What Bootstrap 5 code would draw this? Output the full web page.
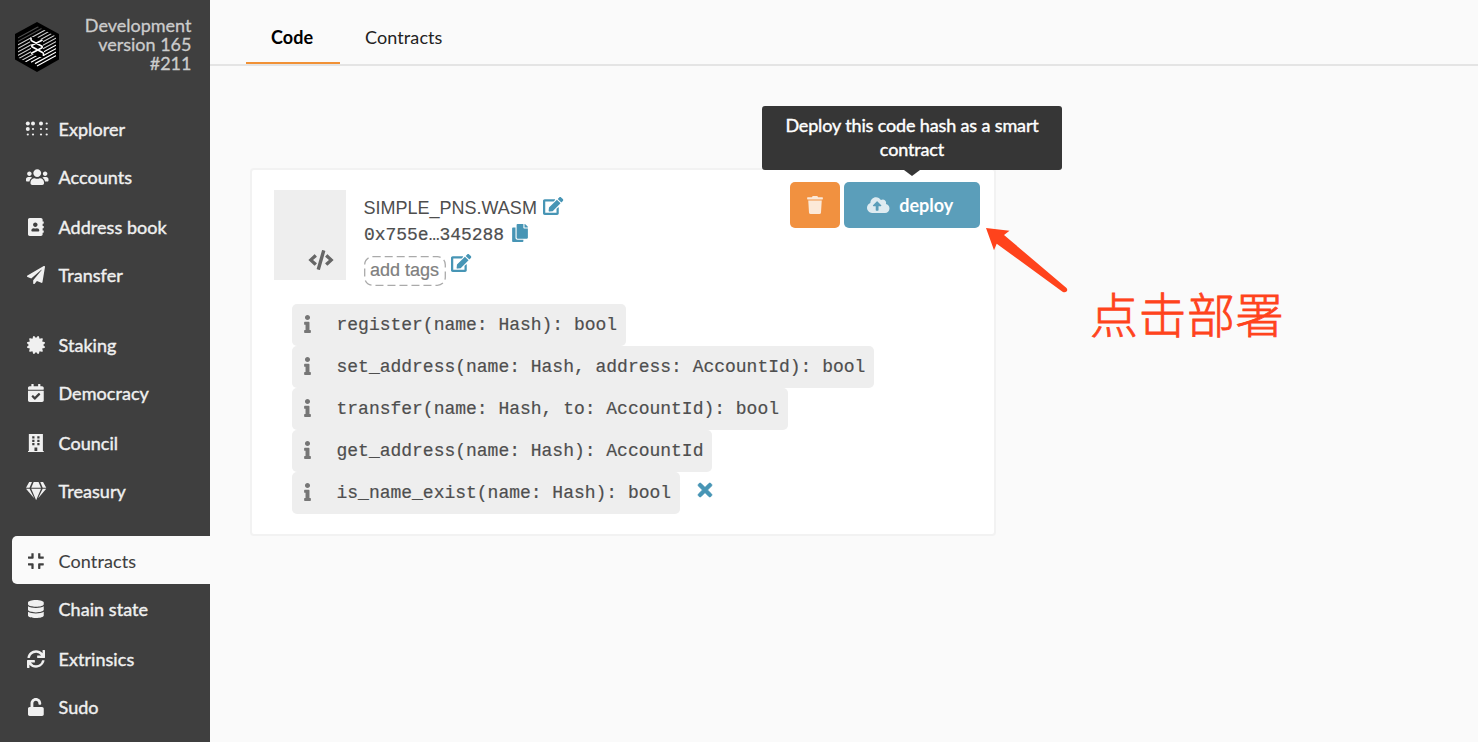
<!DOCTYPE html>
<html lang="en">
<head>
<meta charset="utf-8">
<meta name="viewport" content="width=device-width, initial-scale=1">
<title>Contracts</title>
<link href="https://cdn.jsdelivr.net/npm/bootstrap@5.3.0/dist/css/bootstrap.min.css" rel="stylesheet">
<style>
  body { font-family: Lato, "Noto Sans CJK SC", sans-serif; font-size: 18px; background: #fafafa; color: #4e4e4e; height: 742px; overflow: hidden; }
  svg { display: block; fill: currentColor; flex: none; overflow: visible; }
  .side { width: 210px; height: 742px; background: #3f3f3f; color: #f0f0f0; }
  .brand { height: 104px; padding: 16px 18.5px 0 15px; }
  .brand-info { line-height: 19px; color: #ccc; -webkit-text-stroke: .3px #ccc; }
  .brand svg { margin-top: 6px; }
  .side-group { margin-bottom: 22px; }
  .side-link { height: 48px; margin-left: 12px; padding: 2px 0 0 14px; border-radius: 5px 0 0 5px; color: #f0f0f0; text-decoration: none; -webkit-text-stroke: .4px; letter-spacing: .05px; }
  .side-link:nth-child(3) { margin-top: 2px; }
  .side-link.active { background: #fafafa; color: #3f3f3f; -webkit-text-stroke: .1px; letter-spacing: .12px; }
  .side-icon { width: 19px; margin-right: 13.500px; }
  .side-icon svg { height: 18px; }
  .tabs { height: 66px; padding-left: 36px; border-bottom: 2px solid #e4e4e4; }
  .tabs a { height: 64px; padding: 24px 25px 0; color: #222; text-decoration: none; border-bottom: 2px solid transparent; letter-spacing: .1px; }
  .tabs a.active { width: 94px; font-weight: 700; color: #000; border-color: #f19135; }
  .code-card { width: 746px; height: 368px; margin: 102px 0 0 40px; padding: 20px 14px 0 22px; border: 2px solid #f2f2f2; border-radius: 4px; background: #fff; }
  .thumb { width: 72px; height: 90px; background: #eee; padding: 0 12.500px 10px 0; color: #666; margin-right: 18px; }
  .sans { font-family: "Liberation Sans", sans-serif; }
  .mono { font-family: "Liberation Mono", monospace; }
  .teal { color: #4795b5; }
  .code-name { height: 32px; padding-top: 5px; gap: 6px; margin-left: -.5px; }
  .code-name svg { margin-bottom: 6px; }
  .code-hash { height: 26px; gap: 8px; letter-spacing: -.03px; -webkit-text-stroke: .2px; }
  .code-hash svg { margin-bottom: 4px; }
  .tag-row { height: 32px; padding-top: 6px; margin-top: 2px; }
  .tag-row > svg { margin: -2px 0 0 5px; }
  .tag-box { width: 82px; height: 30px; color: #808080; padding: 0 1px 2px 0; line-height: 28px; -webkit-text-stroke: .2px; }
  .tag-box rect { fill: none; stroke: #aaa; stroke-width: 1.3; stroke-dasharray: 8 4; }
  .head-row { height: 98px; }
  .actions { margin-top: -8px; gap: 4px; height: 46px; }
  .act { height: 46px; border: 0; border-radius: 5px; color: #fff; padding: 0; }
  .act svg { opacity: .8; }
  .act-del { width: 50px; background: #f19140; padding-right: 1px; }
  .act-deploy { width: 136px; background: #5b9eba; font-weight: 700; gap: 10px; padding-right: 4px; }
  .tip { left: 50%; bottom: calc(100% + 12px); width: 300px; height: 64px; margin-left: -150px; padding: 7px 15px; background: #363636; border-radius: 3px; line-height: 24px; font-weight: 400; letter-spacing: -.14px; color: #fff; -webkit-text-stroke: .4px; }
  .tip::after { content: ""; position: absolute; left: 142px; top: 64px; border: 8px solid transparent; border-top: 6px solid #363636; border-bottom: 0; }
  .methods { margin: 16px 0 0 18px; }
  .method { height: 42px; background: #eee; border-radius: 5px; padding: 0 9px 0 12px; letter-spacing: -.01px; -webkit-text-stroke: .2px; }
  .method svg { color: #767676; margin: 0 25.500px 2px 0; }
  .clear-icon { margin: 0 0 7px 18px; }
  .note-arrow { left: 980px; top: 222px; }
  .note { left: 1090px; top: 277px; font-family: "Noto Sans CJK SC", sans-serif; font-size: 48px; line-height: 70px; color: #ff431c; font-weight: 300; -webkit-text-stroke: .8px #ff431c; letter-spacing: .5px; white-space: nowrap; }
</style>
</head>
<body class="d-flex position-relative">
<aside class="side flex-shrink-0">
  <div class="brand d-flex justify-content-between">
    <svg width="44" height="50" viewBox="0 0 44 50">
      <defs><clipPath id="hex"><path d="M22 4 41 14.500V35.500L22 46 3 35.500V14.500z"/></clipPath></defs>
      <path d="M22 0 44 12V37.500L22 50 0 37.500V12z" fill="#000"/>
      <g clip-path="url(#hex)" stroke="#fff" stroke-width="1.200">
        <path opacity=".3" d="M0 14 44-10M0 17.500 44-6.500M0 21 44-3"/>
        <path opacity=".8" d="M0 24.500 44 .5M0 28 44 4M0 31.500 44 7.500M0 35 44 11M0 38.500 44 14.500M0 42 44 18"/>
        <path d="M0 45.500 44 21.500M16 40.300 44 25M20 41.600 44 28.500M22 44 44 32M22 47.500 44 35.500"/>
      </g>
      <path d="M16 15h6l6 4v4l-1 2 2 4v6h-6l-7-4v-5l1-3-2-3z" fill="#000"/>
      <path d="M16 15.500v2q0 1 1 1.500l9.500 5q1.500 1 0 2l-10.500 5.500M27.500 18 17.500 23q-1.500 1 0 2l10 5.500q1 .5 1 1.500V34" fill="none" stroke="#fff" stroke-width="1.600"/>
    </svg>
    <div class="brand-info text-end">Development<br>version 165<br>#211</div>
  </div>
  <nav>
    <div class="side-group">
      <a class="side-link d-flex align-items-center" href="#"><span class="side-icon d-flex"><svg width="23" viewBox="0 0 23 18"><circle cx="1.800" cy="3.500" r="2"/><circle cx="7" cy="3.500" r="2"/><circle cx="15" cy="3.500" r="2"/><circle cx="20.700" cy="3.500" r="1.100"/><circle cx="1.800" cy="9" r="2"/><circle cx="7" cy="9" r="1.100"/><circle cx="15" cy="9" r="1.100"/><circle cx="20.700" cy="9" r="1.100"/><circle cx="1.800" cy="14.500" r="1.100"/><circle cx="7" cy="14.500" r="1.100"/><circle cx="15" cy="14.500" r="1.100"/><circle cx="20.700" cy="14.500" r="1.100"/></svg></span>Explorer</a>
      <a class="side-link d-flex align-items-center" href="#"><span class="side-icon d-flex"><svg viewBox="0 0 640 512"><path d="M96 224c35.300 0 64-28.700 64-64s-28.700-64-64-64-64 28.700-64 64 28.700 64 64 64zm448 0c35.300 0 64-28.700 64-64s-28.700-64-64-64-64 28.700-64 64 28.700 64 64 64zm32 32h-64c-17.600 0-33.500 7.100-45.100 18.600 40.300 22.100 68.900 62 75.100 109.400h66c17.700 0 32-14.300 32-32v-32c0-35.300-28.700-64-64-64zm-256 0c61.900 0 112-50.100 112-112S381.900 32 320 32 208 82.100 208 144s50.100 112 112 112zm76.800 32h-8.300c-20.800 10-43.900 16-68.500 16s-47.600-6-68.500-16h-8.300C179.600 288 128 339.600 128 403.200V432c0 26.500 21.500 48 48 48h288c26.500 0 48-21.500 48-48v-28.800c0-63.600-51.600-115.200-115.200-115.200zm-223.700-13.400C161.500 263.100 145.600 256 128 256H64c-35.300 0-64 28.700-64 64v32c0 17.700 14.300 32 32 32h65.900c6.300-47.400 34.900-87.300 75.200-109.400z"/></svg></span>Accounts</a>
      <a class="side-link d-flex align-items-center" href="#"><span class="side-icon d-flex justify-content-center"><svg viewBox="0 0 448 512"><path d="M436 160c6.600 0 12-5.400 12-12v-40c0-6.600-5.400-12-12-12h-20V48c0-26.500-21.500-48-48-48H48C21.500 0 0 21.500 0 48v416c0 26.500 21.500 48 48 48h320c26.500 0 48-21.500 48-48v-48h20c6.600 0 12-5.400 12-12v-40c0-6.600-5.400-12-12-12h-20v-64h20c6.600 0 12-5.400 12-12v-40c0-6.600-5.400-12-12-12h-20v-64h20zm-228-32c35.300 0 64 28.700 64 64s-28.700 64-64 64-64-28.700-64-64 28.700-64 64-64zm112 236.800c0 10.600-10 19.200-22.400 19.200H118.400C106 384 96 375.400 96 364.800v-19.200c0-31.800 30.100-57.600 67.200-57.600h5c12.300 5.100 25.700 8 39.800 8s27.600-2.900 39.800-8h5c37.100 0 67.200 25.800 67.200 57.600v19.200z"/></svg></span>Address book</a>
      <a class="side-link d-flex align-items-center" href="#"><span class="side-icon d-flex justify-content-center"><svg viewBox="0 0 512 512"><path d="M476 3.200L12.500 270.600c-18.100 10.400-15.800 35.600 2.200 43.200L121 358.400l287.300-253.200c5.500-4.900 13.300 2.600 8.600 8.300L176 407v80.500c0 23.600 28.500 32.900 42.500 15.800L282 426l124.600 52.200c14.200 6 30.400-2.900 33-18.200l72-432C515 7.800 493.300-6.800 476 3.200z"/></svg></span>Transfer</a>
    </div>
    <div class="side-group">
      <a class="side-link d-flex align-items-center" href="#"><span class="side-icon d-flex justify-content-center"><svg viewBox="0 0 512 512"><path d="M458.622 255.920l45.985-45.005c13.708-12.977 7.316-36.039-10.664-40.339l-62.650-15.990 17.661-62.015c4.991-17.838-11.829-34.663-29.661-29.671l-61.994 17.667-15.984-62.671C337.085.197 313.765-6.276 300.990 7.228L256 53.570 211.011 7.229c-12.630-13.351-36.047-7.234-40.325 10.668l-15.984 62.671-61.995-17.667C74.870 57.907 58.056 74.738 63.046 92.572l17.661 62.015-62.650 15.990C.069 174.878-6.310 197.944 7.392 210.915l45.985 45.005-45.985 45.004c-13.708 12.977-7.316 36.039 10.664 40.339l62.650 15.990-17.661 62.015c-4.991 17.838 11.829 34.663 29.661 29.671l61.994-17.667 15.984 62.671c4.439 18.575 27.696 24.018 40.325 10.668L256 458.610l44.989 46.001c12.500 13.488 35.987 7.486 40.325-10.668l15.984-62.671 61.994 17.667c17.836 4.994 34.651-11.837 29.661-29.671l-17.661-62.015 62.650-15.990c17.987-4.302 24.366-27.367 10.664-40.339l-45.984-45.004z"/></svg></span>Staking</a>
      <a class="side-link d-flex align-items-center" href="#"><span class="side-icon d-flex justify-content-center"><svg viewBox="0 0 448 512"><path d="M436 160H12c-6.627 0-12-5.373-12-12v-36c0-26.510 21.490-48 48-48h48V12c0-6.627 5.373-12 12-12h40c6.627 0 12 5.373 12 12v52h128V12c0-6.627 5.373-12 12-12h40c6.627 0 12 5.373 12 12v52h48c26.510 0 48 21.490 48 48v36c0 6.627-5.373 12-12 12zM12 192h424c6.627 0 12 5.373 12 12v260c0 26.510-21.490 48-48 48H48c-26.510 0-48-21.490-48-48V204c0-6.627 5.373-12 12-12zm333.296 95.947l-28.169-28.398c-4.667-4.705-12.265-4.736-16.970-.068L194.120 364.665l-45.980-46.352c-4.667-4.705-12.266-4.736-16.971-.068l-28.397 28.170c-4.705 4.667-4.736 12.265-.068 16.970l82.601 83.269c4.667 4.705 12.265 4.736 16.970.068l142.953-141.805c4.705-4.667 4.736-12.265.068-16.970z"/></svg></span>Democracy</a>
      <a class="side-link d-flex align-items-center" href="#"><span class="side-icon d-flex justify-content-center"><svg viewBox="0 0 448 512"><path fill-rule="evenodd" d="M24 0H424V480H448V512H0V480H24zM120 64v64h64V64zM264 64v64h64V64zM120 160v64h64v-64zM264 160v64h64v-64zM120 256v64h64v-64zM264 256v64h64v-64zM184 384v96h80v-96z"/></svg></span>Council</a>
      <a class="side-link d-flex align-items-center" href="#"><span class="side-icon d-flex"><svg viewBox="0 0 576 512"><path d="M485.500 0L576 160H474.900L405.700 0h79.800zm-128 0l69.200 160H149.300L218.500 0h139zm-267 0h79.800l-69.200 160H0L90.500 0zM0 192h100.700l123 251.700c1.500 3.100-2.700 5.900-5 3.300L0 192zm148.200 0h279.600l-137 318.200c-1 2.400-4.500 2.400-5.500 0L148.200 192zm204.100 251.700l123-251.700H576L357.300 446.900c-2.300 2.700-6.500-.1-5-3.200z"/></svg></span>Treasury</a>
    </div>
    <div class="side-group">
      <a class="side-link active d-flex align-items-center" href="#"><span class="side-icon d-flex justify-content-center"><svg viewBox="0 0 448 512"><path d="M436 192H312c-13.300 0-24-10.700-24-24V44c0-6.600 5.400-12 12-12h40c6.600 0 12 5.400 12 12v84h84c6.600 0 12 5.400 12 12v40c0 6.600-5.400 12-12 12zm-276-24V44c0-6.600-5.400-12-12-12h-40c-6.600 0-12 5.400-12 12v84H12c-6.600 0-12 5.400-12 12v40c0 6.600 5.400 12 12 12h124c13.300 0 24-10.700 24-24zm0 300V344c0-13.300-10.700-24-24-24H12c-6.600 0-12 5.400-12 12v40c0 6.600 5.400 12 12 12h84v84c0 6.600 5.400 12 12 12h40c6.600 0 12-5.400 12-12zm192 0v-84h84c6.600 0 12-5.400 12-12v-40c0-6.600-5.400-12-12-12H312c-13.300 0-24 10.700-24 24v124c0 6.600 5.400 12 12 12h40c6.600 0 12-5.400 12-12z"/></svg></span>Contracts</a>
      <a class="side-link d-flex align-items-center" href="#"><span class="side-icon d-flex justify-content-center"><svg viewBox="0 0 448 512"><path d="M448 73.143v45.714C448 159.143 347.667 192 224 192S0 159.143 0 118.857V73.143C0 32.857 100.333 0 224 0s224 32.857 224 73.143zM448 176v102.857C448 319.143 347.667 352 224 352S0 319.143 0 278.857V176c48.125 33.143 136.208 48.572 224 48.572S399.874 209.143 448 176zm0 160v102.857C448 479.143 347.667 512 224 512S0 479.143 0 438.857V336c48.125 33.143 136.208 48.572 224 48.572S399.874 369.143 448 336z"/></svg></span>Chain state</a>
      <a class="side-link d-flex align-items-center" href="#"><span class="side-icon d-flex justify-content-center"><svg viewBox="0 0 512 512"><path d="M440.650 12.570l4 82.770A247.160 247.160 0 0 0 255.830 8C134.730 8 33.910 94.920 12.290 209.820A12 12 0 0 0 24.090 224h49.050a12 12 0 0 0 11.670-9.260 175.910 175.910 0 0 1 317-56.940l-101.460-4.860a12 12 0 0 0-12.570 12v47.410a12 12 0 0 0 12 12H500a12 12 0 0 0 12-12V12a12 12 0 0 0-12-12h-47.370a12 12 0 0 0-11.980 12.570zM255.830 432a175.610 175.610 0 0 1-146-77.800l101.800 4.870a12 12 0 0 0 12.570-12v-47.400a12 12 0 0 0-12-12H12a12 12 0 0 0-12 12V500a12 12 0 0 0 12 12h47.350a12 12 0 0 0 12-12.600l-4.150-82.570A247.170 247.170 0 0 0 255.830 504c121.110 0 221.930-86.920 243.550-201.820a12 12 0 0 0-11.800-14.180h-49.050a12 12 0 0 0-11.670 9.260A175.860 175.860 0 0 1 255.830 432z"/></svg></span>Extrinsics</a>
      <a class="side-link d-flex align-items-center" href="#"><span class="side-icon d-flex justify-content-center"><svg viewBox="0 0 448 512"><path d="M400 256H152V152.900c0-39.600 31.700-72.500 71.300-72.900 40-.4 72.700 32.100 72.700 72v16c0 13.300 10.700 24 24 24h32c13.300 0 24-10.700 24-24v-16C376 68 307.500-.3 223.500 0 139.500.3 72 69.500 72 153.500V256H48c-26.500 0-48 21.500-48 48v160c0 26.500 21.500 48 48 48h352c26.500 0 48-21.500 48-48V304c0-26.500-21.500-48-48-48z"/></svg></span>Sudo</a>
    </div>
  </nav>
</aside>
<main class="flex-grow-1">
  <div class="tabs d-flex"><a class="active" href="#">Code</a><a href="#">Contracts</a></div>
  <article class="code-card">
    <div class="head-row d-flex align-items-start">
      <div class="thumb d-flex align-items-end justify-content-end"><svg width="26" height="20" viewBox="0 0 640 512"><path d="M278.900 511.500l-61-17.700c-6.400-1.800-10-8.500-8.200-14.900L346.200 8.700c1.800-6.400 8.500-10 14.900-8.200l61 17.700c6.400 1.800 10 8.500 8.200 14.900L293.800 503.300c-1.900 6.400-8.500 10.100-14.900 8.200zm-114-112.200l43.500-46.400c4.600-4.900 4.300-12.700-.8-17.200L117 256l90.600-79.700c5.100-4.500 5.500-12.300.8-17.200l-43.500-46.400c-4.500-4.800-12.100-5.100-17-.5L3.800 247.200c-5.100 4.700-5.100 12.800 0 17.500l144.100 135.100c4.900 4.600 12.500 4.400 17-.5zm327.200.6l144.100-135.100c5.100-4.700 5.100-12.800 0-17.500L492.100 112.100c-4.800-4.500-12.400-4.300-17 .5L431.600 159c-4.600 4.900-4.300 12.700.8 17.200L523 256l-90.600 79.700c-5.100 4.500-5.500 12.300-.8 17.200l43.500 46.400c4.500 4.900 12.100 5.100 17 .6z"/></svg></div>
      <div class="flex-grow-1">
        <div class="code-name sans d-flex align-items-center"><span>SIMPLE_PNS.WASM</span>
          <svg class="teal" width="20.250" height="18" viewBox="0 0 576 512"><path id="edit" d="M402.600 83.200l90.200 90.200c3.800 3.800 3.800 10 0 13.800L274.400 405.600l-92.800 10.300c-12.400 1.400-22.900-9.100-21.500-21.500l10.300-92.800L388.800 83.200c3.800-3.800 10-3.800 13.800 0zm162-22.900l-48.800-48.800c-15.200-15.200-39.900-15.200-55.200 0l-35.400 35.400c-3.800 3.800-3.800 10 0 13.800l90.200 90.200c3.800 3.800 10 3.800 13.800 0l35.400-35.400c15.200-15.300 15.200-40 0-55.200zM384 346.200V448H64V128h229.800c3.200 0 6.200-1.300 8.500-3.500l40-40c7.600-7.600 2.200-20.500-8.500-20.500H48C21.500 64 0 85.500 0 112v352c0 26.500 21.500 48 48 48h352c26.500 0 48-21.500 48-48V306.200c0-10.700-12.900-16-20.500-8.500l-40 40c-2.200 2.300-3.500 5.300-3.500 8.500z"/></svg></div>
        <div class="code-hash mono d-flex align-items-center"><span>0x755e…345288</span>
          <svg class="teal" width="16" height="18" viewBox="0 0 448 512"><path d="M320 448v40c0 13.255-10.745 24-24 24H24c-13.255 0-24-10.745-24-24V120c0-13.255 10.745-24 24-24h72v296c0 30.879 25.121 56 56 56h168zm0-344V0H152c-13.255 0-24 10.745-24 24v368c0 13.255 10.745 24 24 24h272c13.255 0 24-10.745 24-24V128H344c-13.200 0-24-10.800-24-24zm120.971-31.029L375.029 7.029A24 24 0 0 0 358.059 0H352v96h96v-6.059a24 24 0 0 0-7.029-16.970z"/></svg></div>
        <div class="tag-row d-flex align-items-start sans">
          <span class="tag-box position-relative d-flex align-items-center justify-content-center"><svg class="position-absolute top-0 start-0" width="82" height="30"><rect x=".7" y=".7" width="80.600" height="28.600" rx="8"/></svg>add tags</span>
          <svg class="teal" width="20.250" height="18" viewBox="0 0 576 512"><use href="#edit"/></svg>
        </div>
      </div>
      <div class="actions d-flex">
        <button class="act act-del d-flex align-items-center justify-content-center" aria-label="Delete"><svg width="16" height="18" viewBox="0 0 448 512"><path d="M432 32H312l-9.400-18.700A24 24 0 0 0 281.100 0H166.800a23.720 23.720 0 0 0-21.400 13.300L136 32H16A16 16 0 0 0 0 48v32a16 16 0 0 0 16 16h416a16 16 0 0 0 16-16V48a16 16 0 0 0-16-16zM53.200 467a48 48 0 0 0 47.900 45h245.800a48 48 0 0 0 47.900-45L416 128H32z"/></svg></button>
        <button class="act act-deploy position-relative d-flex align-items-center justify-content-center"><svg width="22.500" height="18" viewBox="0 0 640 512"><path d="M537.600 226.600c4.100-10.700 6.400-22.400 6.400-34.600 0-53-43-96-96-96-19.700 0-38.100 6-53.300 16.200C367 64.200 315.300 32 256 32c-88.400 0-160 71.600-160 160 0 2.700.1 5.400.2 8.100C40.200 219.800 0 273.200 0 336c0 79.500 64.500 144 144 144h368c70.700 0 128-57.300 128-128 0-61.900-44-113.600-102.400-125.400zM393.400 288H328v112c0 8.800-7.200 16-16 16h-48c-8.800 0-16-7.200-16-16V288h-65.400c-14.300 0-21.400-17.200-11.300-27.300l105.400-105.400c6.200-6.200 16.400-6.200 22.600 0l105.400 105.400c10.100 10.100 2.900 27.300-11.300 27.300z"/></svg>deploy<span class="tip position-absolute">Deploy this code hash as a smart contract</span></button>
      </div>
    </div>
    <div class="methods mono d-flex flex-column align-items-start">
      <div class="method d-flex align-items-center"><svg width="7" height="18" viewBox="0 0 192 512"><path id="info" d="M20 424.229h20V279.771H20c-11.046 0-20-8.954-20-20V212c0-11.046 8.954-20 20-20h112c11.046 0 20 8.954 20 20v212.229h20c11.046 0 20 8.954 20 20V492c0 11.046-8.954 20-20 20H20c-11.046 0-20-8.954-20-20v-47.771c0-11.046 8.954-20 20-20zM96 0C56.235 0 24 32.235 24 72s32.235 72 72 72 72-32.235 72-72S135.764 0 96 0z"/></svg>register(name: Hash): bool</div>
      <div class="method d-flex align-items-center"><svg width="7" height="18" viewBox="0 0 192 512"><use href="#info"/></svg>set_address(name: Hash, address: AccountId): bool</div>
      <div class="method d-flex align-items-center"><svg width="7" height="18" viewBox="0 0 192 512"><use href="#info"/></svg>transfer(name: Hash, to: AccountId): bool</div>
      <div class="method d-flex align-items-center"><svg width="7" height="18" viewBox="0 0 192 512"><use href="#info"/></svg>get_address(name: Hash): AccountId</div>
      <div class="d-flex align-items-center">
        <div class="method d-flex align-items-center"><svg width="7" height="18" viewBox="0 0 192 512"><use href="#info"/></svg>is_name_exist(name: Hash): bool</div>
        <svg class="clear-icon teal" width="14" height="14" viewBox="0 80 352 352"><path stroke="currentColor" stroke-width="16" d="M242.720 256l100.070-100.070c12.280-12.280 12.280-32.190 0-44.480l-22.240-22.240c-12.280-12.280-32.190-12.280-44.480 0L176 189.280 75.930 89.210c-12.280-12.280-32.190-12.280-44.480 0L9.210 111.450c-12.280 12.280-12.280 32.190 0 44.480L109.280 256 9.210 356.070c-12.280 12.280-12.280 32.190 0 44.480l22.240 22.240c12.280 12.280 32.200 12.280 44.480 0L176 322.720l100.070 100.070c12.280 12.280 32.200 12.280 44.480 0l22.240-22.240c12.280-12.280 12.280-32.190 0-44.480L242.720 256z"/></svg>
      </div>
    </div>
  </article>
</main>
<svg class="note-arrow position-absolute" width="92" height="74" viewBox="980 222 92 74"><path d="M986 228 1009.500 230.700 1004 235 1066.500 288Q1068 290 1066.500 291.500 1065 293 1062.500 291.800L996.700 243.700 994 250.200z" fill="#ff431c"/></svg>
<div class="note position-absolute">点击部署</div>
<script src="https://cdn.jsdelivr.net/npm/bootstrap@5.3.0/dist/js/bootstrap.bundle.min.js"></script>
</body>
</html>
